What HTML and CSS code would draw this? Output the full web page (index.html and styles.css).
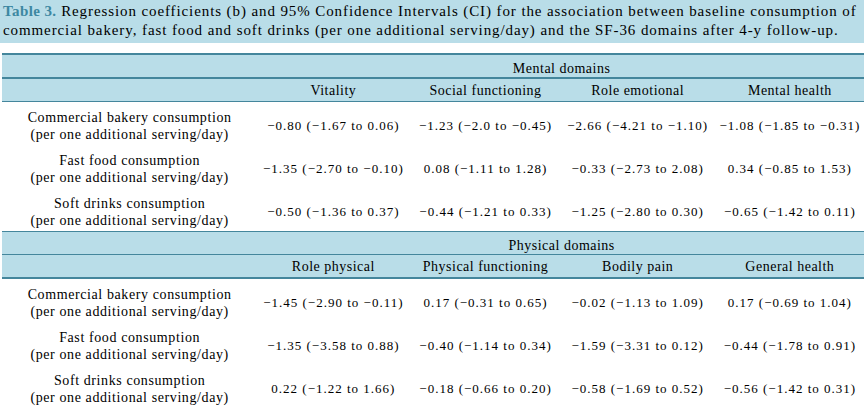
FILE: index.html
```html
<!DOCTYPE html>
<html lang="en">
<head>
<meta charset="utf-8">
<title>Table 3</title>
<link rel="stylesheet" href="styles.css">
</head>
<body>
<div class="caption"><span class="tab-label">Table 3.</span> Regression coefficients (b) and 95% Confidence Intervals (CI) for the association between baseline consumption of<br>commercial bakery, fast food and soft drinks (per one additional serving/day) and the SF-36 domains after 4-y follow-up.</div>
<table class="results">
  <colgroup>
    <col class="c-label">
    <col class="c-val">
    <col class="c-val">
    <col class="c-val">
    <col class="c-val">
  </colgroup>
  <tbody>
    <tr class="domain first">
      <td></td><td colspan="4">Mental domains</td>
    </tr>
    <tr class="heads">
      <td></td><td>Vitality</td><td>Social functioning</td><td>Role emotional</td><td>Mental health</td>
    </tr>
    <tr class="data">
      <td class="lbl">Commercial bakery consumption<br>(per one additional serving/day)</td>
      <td>&minus;0.80 (&minus;1.67 to 0.06)</td>
      <td>&minus;1.23 (&minus;2.0 to &minus;0.45)</td>
      <td>&minus;2.66 (&minus;4.21 to &minus;1.10)</td>
      <td>&minus;1.08 (&minus;1.85 to &minus;0.31)</td>
    </tr>
    <tr class="data">
      <td class="lbl">Fast food consumption<br>(per one additional serving/day)</td>
      <td>&minus;1.35 (&minus;2.70 to &minus;0.10)</td>
      <td>0.08 (&minus;1.11 to 1.28)</td>
      <td>&minus;0.33 (&minus;2.73 to 2.08)</td>
      <td>0.34 (&minus;0.85 to 1.53)</td>
    </tr>
    <tr class="data">
      <td class="lbl">Soft drinks consumption<br>(per one additional serving/day)</td>
      <td>&minus;0.50 (&minus;1.36 to 0.37)</td>
      <td>&minus;0.44 (&minus;1.21 to 0.33)</td>
      <td>&minus;1.25 (&minus;2.80 to 0.30)</td>
      <td>&minus;0.65 (&minus;1.42 to 0.11)</td>
    </tr>
    <tr class="domain second">
      <td></td><td colspan="4">Physical domains</td>
    </tr>
    <tr class="heads last">
      <td></td><td>Role physical</td><td>Physical functioning</td><td>Bodily pain</td><td>General health</td>
    </tr>
    <tr class="data">
      <td class="lbl">Commercial bakery consumption<br>(per one additional serving/day)</td>
      <td>&minus;1.45 (&minus;2.90 to &minus;0.11)</td>
      <td>0.17 (&minus;0.31 to 0.65)</td>
      <td>&minus;0.02 (&minus;1.13 to 1.09)</td>
      <td>0.17 (&minus;0.69 to 1.04)</td>
    </tr>
    <tr class="data">
      <td class="lbl">Fast food consumption<br>(per one additional serving/day)</td>
      <td>&minus;1.35 (&minus;3.58 to 0.88)</td>
      <td>&minus;0.40 (&minus;1.14 to 0.34)</td>
      <td>&minus;1.59 (&minus;3.31 to 0.12)</td>
      <td>&minus;0.44 (&minus;1.78 to 0.91)</td>
    </tr>
    <tr class="data">
      <td class="lbl">Soft drinks consumption<br>(per one additional serving/day)</td>
      <td>0.22 (&minus;1.22 to 1.66)</td>
      <td>&minus;0.18 (&minus;0.66 to 0.20)</td>
      <td>&minus;0.58 (&minus;1.69 to 0.52)</td>
      <td>&minus;0.56 (&minus;1.42 to 0.31)</td>
    </tr>
  </tbody>
</table>
</body>
</html>
```

FILE: styles.css
```css
html, body {
  margin: 0;
  padding: 0;
  background: #ffffff;
}

body {
  font-family: "Liberation Serif", "Times New Roman", serif;
  color: #000;
  overflow: hidden;
}

.caption {
  background: #b9dde8;
  font-size: 15px;
  line-height: 19px;
  letter-spacing: 0.9px;
  padding: 2px 0 3px 3px;
  white-space: nowrap;
  margin-bottom: 10px;
}

.tab-label {
  color: #3d88a2;
  font-weight: bold;
  letter-spacing: 0.4px;
}

.results {
  border-collapse: collapse;
  margin-left: 2px;
  width: 864px;
  table-layout: fixed;
}

.c-label { width: 255px; }
.c-val { width: 152px; }

.results td {
  padding: 0;
  text-align: center;
  vertical-align: middle;
  white-space: nowrap;
}

.domain td,
.heads td {
  background: #b9dde8;
  font-size: 14px;
  height: 22px;
  line-height: 17px;
  letter-spacing: 0.5px;
}

.domain td {
  height: 18px;
  padding-top: 4px;
}

.domain.first td {
  border-top: 2px solid #44869c;
  border-bottom: 2px solid #44869c;
}

.domain.second td {
  border-top: 1px solid #44869c;
  border-bottom: 1px solid #44869c;
}

.heads td {
  border-bottom: 1px solid #44869c;
}

.heads.last td {
  border-bottom: 2px solid #44869c;
}

.data td {
  height: 39px;
  padding-top: 4px;
  font-size: 13px;
  line-height: 17px;
  letter-spacing: 1px;
}

.data td.lbl {
  font-size: 14px;
  letter-spacing: 0.6px;
}
```
